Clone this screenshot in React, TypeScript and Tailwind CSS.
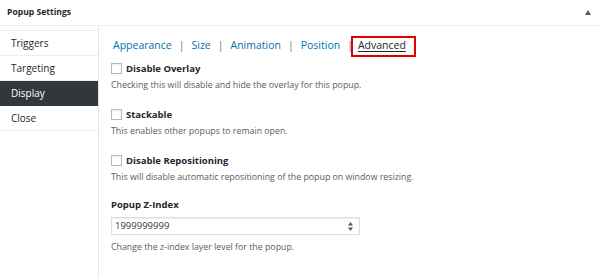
import React from "react";

const Checkbox = () => (
  <span className="w-[11px] h-[11px] border border-[#b4b9be] bg-white shrink-0 shadow-[inset_0_1px_2px_rgba(0,0,0,0.08)]" />
);

const CheckRow = ({ label, desc, first }: { label: string; desc: string; first?: boolean }) => (
  <div className={first ? "mt-[6px]" : "mt-[18px]"}>
    <div className="flex items-center h-[11px]">
      <Checkbox />
      <span className="ml-[4px] text-[9.5px] font-bold text-[#23282d] leading-[11px]">{label}</span>
    </div>
    <div className="mt-[5px] text-[8.8px] leading-[12px] text-[#555d66]">{desc}</div>
  </div>
);

export default function App() {
  const tabs = ["Appearance", "Size", "Animation", "Position"];
  return (
    <div
      className="w-[600px] h-[278px] bg-white overflow-hidden flex flex-col"
      style={{ fontFamily: '"Open Sans", "Noto Sans", sans-serif' }}
    >
      <div className="h-[26px] border-b border-[#eeeeee] flex items-center justify-between pl-[7px] pr-[9px] shrink-0">
        <span className="text-[8.6px] font-bold text-[#23282d]">Popup Settings</span>
        <svg width="6" height="5" viewBox="0 0 6 5">
          <path d="M3 0 L6 5 L0 5 Z" fill="#555d66" />
        </svg>
      </div>
      <div className="flex flex-1">
        <div className="w-[99px] border-r border-[#e5e5e5] pt-[4px] shrink-0">
          <div className="border-t border-[#f0f0f0]" />
          {["Triggers", "Targeting", "Display", "Close"].map((t) => (
            <div
              key={t}
              className={
                t === "Display"
                  ? "h-[25px] flex items-center pl-[11px] text-[10px] bg-[#32373c] text-white"
                  : "h-[25px] flex items-center pl-[11px] text-[10px] text-[#23282d] border-b border-[#eeeeee]"
              }
            >
              {t}
            </div>
          ))}
        </div>
        <div className="flex-1 pl-[12px]">
          <div className="mt-[10px] ml-[2px] h-[21px] flex items-start text-[10.5px] leading-[14px]">
            {tabs.map((t) => (
              <React.Fragment key={t}>
                <span className="pt-[2px] text-[#0073aa]">{t}</span>
                <span className="pt-[2px] text-[#72777c] mx-[7px]">|</span>
              </React.Fragment>
            ))}
            <span className="-ml-[9px] h-[21px] border-2 border-[#e00000] pl-[5px] pr-[8px] text-[#23282d] underline underline-offset-[2px]">
              Advanced
            </span>
          </div>
          <CheckRow first label="Disable Overlay" desc="Checking this will disable and hide the overlay for this popup." />
          <CheckRow label="Stackable" desc="This enables other popups to remain open." />
          <CheckRow label="Disable Repositioning" desc="This will disable automatic repositioning of the popup on window resizing." />
          <div className="mt-[16px] text-[9.5px] font-bold text-[#23282d] leading-[12px]">Popup Z-Index</div>
          <div className="mt-[6px] w-[249px] h-[18px] border border-[#dddddd] flex items-center justify-between pl-[3px] pr-[6px] shadow-[inset_0_1px_2px_rgba(0,0,0,0.07)]">
            <span className="text-[9.5px] text-[#32373c]">1999999999</span>
            <svg width="5" height="9" viewBox="0 0 5 9">
              <path d="M2.5 0 L5 3.5 L0 3.5 Z" fill="#555" />
              <path d="M2.5 9 L5 5.5 L0 5.5 Z" fill="#555" />
            </svg>
          </div>
          <div className="mt-[6px] text-[8.8px] leading-[12px] text-[#555d66]">Change the z-index layer level for the popup.</div>
        </div>
      </div>
    </div>
  );
}
